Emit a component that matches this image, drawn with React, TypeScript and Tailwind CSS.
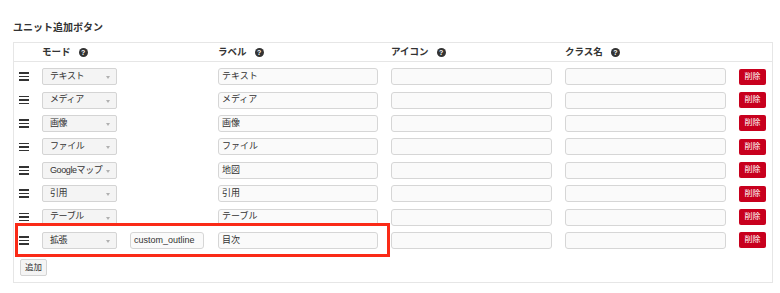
import React from 'react'

const rows = [
  { mode: 'テキスト', label: 'テキスト' },
  { mode: 'メディア', label: 'メディア' },
  { mode: '画像', label: '画像' },
  { mode: 'ファイル', label: 'ファイル' },
  { mode: 'Googleマップ', label: '地図' },
  { mode: '引用', label: '引用' },
  { mode: 'テーブル', label: 'テーブル' },
  { mode: '拡張', label: '目次', custom: 'custom_outline' },
]

function Help() {
  return (
    <span className="ml-[8px] inline-flex h-[9px] w-[9px] items-center justify-center rounded-full bg-[#333] text-[7px] font-bold leading-none text-white">
      ?
    </span>
  )
}

function Handle() {
  return (
    <div className="flex w-[10px] flex-col gap-[2px]">
      <span className="h-[1.5px] w-full bg-[#333]" />
      <span className="h-[1.5px] w-full bg-[#333]" />
      <span className="h-[1.5px] w-full bg-[#333]" />
    </div>
  )
}

function Select({ value }: { value: string }) {
  return (
    <div className="relative flex h-[17px] w-[75px] items-center rounded-[2px] border border-[#d4d4d4] bg-[#f4f4f4] pl-[7px] text-[9px] text-[#333]">
      <span className="block whitespace-nowrap tracking-[-0.4px]">{value}</span>
      <span className="absolute right-[6px] top-[7px] h-0 w-0 border-x-[2.5px] border-t-[3px] border-x-transparent border-t-[#b0b0b0]" />
    </div>
  )
}

function Field({ value = '', width }: { value?: string; width: string }) {
  return (
    <div className={`flex h-[17px] ${width} items-center rounded-[3px] border border-[#d6d6d6] bg-[#fafafa] px-[3px] text-[9px] text-[#333]`}>
      {value}
    </div>
  )
}

export default function App() {
  return (
    <div
      className="relative h-[293px] w-[780px] bg-white pl-[13px] pt-[22px] text-[#333]"
      style={{ fontFamily: '"Liberation Sans", "Noto Sans CJK JP", sans-serif' }}
    >
      <h3 className="mb-[8px] h-[12px] text-[10px] font-bold leading-[12px]">ユニット追加ボタン</h3>

      <div className="w-[760px] border border-[#e6e6e6] pb-[6px]">
        {/* ヘッダー */}
        <div className="flex h-[19px] items-center border-b border-[#e6e6e6] text-[9.5px] font-bold">
          <div className="ml-[28px] flex w-[176px] items-center">
            モード
            <Help />
          </div>
          <div className="flex w-[173px] items-center">
            ラベル
            <Help />
          </div>
          <div className="flex w-[174px] items-center">
            アイコン
            <Help />
          </div>
          <div className="flex items-center">
            クラス名
            <Help />
          </div>
        </div>

        <div className="pt-[3px]">
          {rows.map((row, i) => (
            <div key={i} className="flex h-[23.4px] items-center gap-[13px] pl-[5px]">
              <Handle />
              <div className="flex w-[163px] items-center gap-[13px]">
                <Select value={row.mode} />
                {row.custom && <Field value={row.custom} width="w-[74px]" />}
              </div>
              <Field value={row.label} width="w-[160px]" />
              <Field width="w-[161px]" />
              <Field width="w-[161px]" />
              <button className="flex h-[16px] w-[27px] items-center justify-center rounded-[2px] bg-[#c8001e] text-[8px] text-white">
                削除
              </button>
            </div>
          ))}
        </div>

        <button className="ml-[6px] mt-[7px] flex h-[17px] w-[27px] items-center justify-center rounded-[2px] border border-[#d4d4d4] bg-[#f4f4f4] text-[8.5px] text-[#333]">
          追加
        </button>
      </div>

      {/* 強調枠 */}
      <div className="pointer-events-none absolute left-[15px] top-[223px] h-[34px] w-[375px] border-[3px] border-[#fa2a17]" />
    </div>
  )
}
